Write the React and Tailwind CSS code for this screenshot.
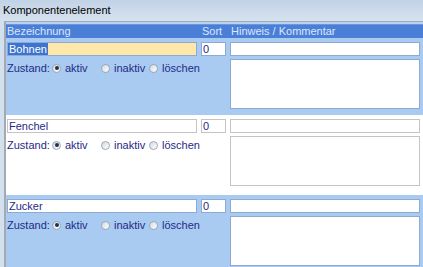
const ROWS = [
  { name: "Bohnen", sort: "0", blue: true, focused: true, h: "h-[77px]" },
  { name: "Fenchel", sort: "0", blue: false, h: "h-[80px]" },
  { name: "Zucker", sort: "0", blue: true, h: "h-[78px]" },
];

function Radio({ checked, label }) {
  return (
    <label className="flex items-center gap-[4px]">
      <span className="w-[9px] h-[9px] rounded-full border border-[#9aa6b4] bg-gradient-to-br from-[#d4dae2] to-white flex items-center justify-center">
        {checked && <span className="w-[4px] h-[4px] rounded-full bg-[#23324a]" />}
      </span>
      <span>{label}</span>
    </label>
  );
}

function Row({ row }) {
  const border = row.blue ? "border-[#8eaad2]" : "border-[#c4c4c4]";
  return (
    <div className={`${row.h} pt-[4px] pl-[1px] ${row.blue ? "bg-[#a9caf1]" : "bg-white"}`}>
      <div className="flex gap-[4px] h-[14px]">
        <div
          className={`w-[190px] border ${border} ${
            row.focused ? "bg-[#fde8a9]" : "bg-white"
          } flex items-center leading-none`}
        >
          {row.focused ? (
            <span className="bg-[#3c74d0] text-white px-[1px] h-full flex items-center">{row.name}</span>
          ) : (
            <span className="px-[1px]">{row.name}</span>
          )}
        </div>
        <div className={`w-[25px] border ${border} bg-white flex items-center px-[1px] leading-none`}>
          {row.sort}
        </div>
        <div className={`w-[190px] border ${border} bg-white`} />
      </div>
      <div className="flex gap-[4px] mt-[3px]">
        <div className="w-[219px] pt-[2px]">
          <div className="flex items-center h-[14px]">
            <span className="w-[45px]">Zustand:</span>
            <div className="w-[49px]">
              <Radio checked label="aktiv" />
            </div>
            <div className="w-[48px]">
              <Radio label="inaktiv" />
            </div>
            <Radio label="löschen" />
          </div>
        </div>
        <div className={`w-[190px] h-[50px] border ${border} bg-white`} />
      </div>
    </div>
  );
}

export default function App() {
  return (
    <div className="w-[423px] h-[267px] overflow-hidden bg-[#d3e0ee] font-['Liberation_Sans',Arial,sans-serif] text-[11px] text-[#1f2a86]">
      <div className="h-[21px] bg-gradient-to-b from-[#c2d3e6] to-[#d6e2ef] pl-[3px] pt-[2px] text-[11px] text-black">
        Komponentenelement
      </div>
      <div className="ml-[4px] border-l-2 border-t border-[#a2aab4] pt-[2px] bg-[#b9d2ef]">
        <div className="h-[14px] bg-[#4b7fd7] border-t border-[#6b97e0] flex items-center pl-[1px] text-[#dbe6fb] leading-none">
          <span className="w-[195px]">Bezeichnung</span>
          <span className="w-[29px]">Sort</span>
          <span>Hinweis / Kommentar</span>
        </div>
        {ROWS.map((row) => (
          <Row key={row.name} row={row} />
        ))}
      </div>
    </div>
  );
}
